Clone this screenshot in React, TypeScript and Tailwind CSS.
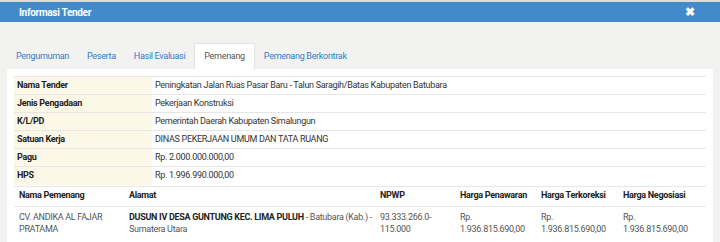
export default function App() {
  const info = [
    ["Nama Tender", "Peningkatan Jalan Ruas Pasar Baru - Talun Saragih/Batas Kabupaten Batubara"],
    ["Jenis Pengadaan", "Pekerjaan Konstruksi"],
    ["K/L/PD", "Pemerintah Daerah Kabupaten Simalungun"],
    ["Satuan Kerja", "DINAS PEKERJAAN UMUM DAN TATA RUANG"],
    ["Pagu", "Rp. 2.000.000.000,00"],
    ["HPS", "Rp. 1.996.990.000,00"],
  ];
  const tabs = ["Pengumuman", "Peserta", "Hasil Evaluasi", "Pemenang", "Pemenang Berkontrak"];

  return (
    <div className="w-[720px] h-[242px] overflow-hidden bg-[#f2f2f1] text-[9px] text-[#333] font-['Roboto',sans-serif] tracking-[-0.3px]">
      <div className="h-[2px] bg-[#dcdcdc]" />
      <div className="h-[20px] bg-[#428bca] flex items-center justify-between pl-[19px] pr-[25px]">
        <span className="text-white font-bold text-[10px]">Informasi Tender</span>
        <span className="text-white font-bold text-[12px] leading-none">✖</span>
      </div>

      <div className="flex pl-[7px] pt-[21px]">
        {tabs.map((t) =>
          t === "Pemenang" ? (
            <div key={t} className="h-[26px] px-[9px] pt-[1px] flex items-center bg-white border border-b-0 border-[#e3e3e3] rounded-t-[2px] text-[#555]">
              {t}
            </div>
          ) : (
            <div key={t} className="h-[26px] px-[9px] pt-[1px] flex items-center text-[#2a7fd0]">
              {t}
            </div>
          )
        )}
      </div>

      <div className="mx-[7px] bg-white rounded-[2px] px-[7px] pt-[7px] h-[200px]">
        <table className="w-full border-collapse">
          <tbody>
            {info.map(([k, v]) => (
              <tr key={k} className="h-[18px] border-t border-[#e6e6e6]">
                <td className="w-[138px] bg-[#fcf8e8] font-bold px-[3px] text-[#222]">{k}</td>
                <td className="px-[3px]">{v}</td>
              </tr>
            ))}
          </tbody>
        </table>
        <table className="w-full border-collapse mt-[1px]">
          <thead>
            <tr className="h-[20px] border-t border-b border-[#e6e6e6] text-[#222] font-bold text-left">
              <th className="w-[111px] pl-[5px] font-bold">Nama Pemenang</th>
              <th className="w-[251px] pl-[4px] font-bold">Alamat</th>
              <th className="w-[80px] pl-[4px] font-bold">NPWP</th>
              <th className="w-[81px] pl-[4px] font-bold">Harga Penawaran</th>
              <th className="w-[82px] pl-[4px] font-bold">Harga Terkoreksi</th>
              <th className="pl-[4px] font-bold">Harga Negosiasi</th>
            </tr>
          </thead>
          <tbody>
            <tr className="align-top leading-[12px] text-[#555]">
              <td className="pl-[5px] pt-[4px]">
                <div className="w-[95px]">CV. ANDIKA AL FAJAR PRATAMA</div>
              </td>
              <td className="pl-[4px] pt-[4px]">
                <span className="font-bold text-[#222]">DUSUN IV DESA GUNTUNG KEC. LIMA PULUH</span> - Batubara (Kab.) - Sumatera Utara
              </td>
              <td className="pl-[4px] pt-[4px]">
                <div className="w-[60px]">93.333.266.0-115.000</div>
              </td>
              <td className="pl-[4px] pt-[4px]">
                <div className="w-[70px]">Rp. 1.936.815.690,00</div>
              </td>
              <td className="pl-[4px] pt-[4px]">
                <div className="w-[70px]">Rp. 1.936.815.690,00</div>
              </td>
              <td className="pl-[4px] pt-[4px]">
                <div className="w-[70px]">Rp. 1.936.815.690,00</div>
              </td>
            </tr>
          </tbody>
        </table>
      </div>
    </div>
  );
}
